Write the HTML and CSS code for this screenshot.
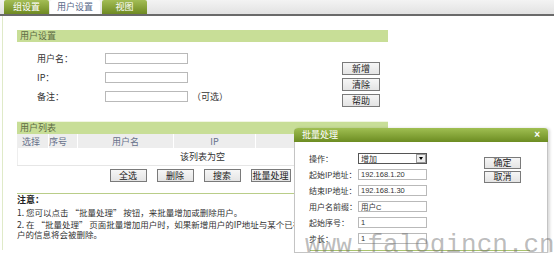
FILE: index.html
```html
<!DOCTYPE html>
<html lang="zh-CN">
<head>
    <meta charset="UTF-8">
    <title>用户设置</title>
    <link rel="stylesheet" href="styles.css">
</head>
<body>
    <div class="topbar">
        <div class="tab">组设置</div>
        <div class="tab active">用户设置</div>
        <div class="tab">视图</div>
    </div>

    <div class="main">
        <div class="content">
            <div class="section-head">用户设置</div>
            <div class="user-form">
                <div class="fields">
                    <div class="field-row">
                        <label>用户名：</label>
                        <input type="text" class="text-input">
                    </div>
                    <div class="field-row">
                        <label>IP：</label>
                        <input type="text" class="text-input">
                    </div>
                    <div class="field-row">
                        <label>备注：</label>
                        <input type="text" class="text-input">
                        <span class="hint">（可选）</span>
                    </div>
                </div>
                <div class="form-buttons">
                    <button class="btn">新增</button>
                    <button class="btn">清除</button>
                    <button class="btn">帮助</button>
                </div>
            </div>

            <div class="section-head">用户列表</div>
            <table class="user-table">
                <thead>
                    <tr>
                        <th class="col-check">选择</th>
                        <th class="col-no">序号</th>
                        <th class="col-name">用户名</th>
                        <th class="col-ip">IP</th>
                        <th>备注</th>
                    </tr>
                </thead>
                <tbody>
                    <tr>
                        <td colspan="5" class="empty">该列表为空</td>
                    </tr>
                </tbody>
            </table>

            <div class="list-buttons">
                <button class="btn">全选</button>
                <button class="btn">删除</button>
                <button class="btn">搜索</button>
                <button class="btn wide">批量处理</button>
            </div>

            <div class="notes">
                <p class="notes-title">注意：</p>
                <p>1. 您可以点击 “批量处理” 按钮，来批量增加或删除用户。</p>
                <p>2. 在 “批量处理” 页面批量增加用户时，如果新增用户的IP地址与某个已有用户的IP地址相同，则该已有用<br>户的信息将会被删除。</p>
            </div>
        </div>
    </div>

    <div class="dialog">
        <div class="dialog-title">
            <span>批量处理</span>
            <span class="close">×</span>
        </div>
        <div class="dialog-body">
            <div class="dialog-fields">
                <div class="field-row">
                    <label>操作：</label>
                    <div class="select-box">
                        <span>增加</span>
                        <span class="select-arrow"></span>
                    </div>
                </div>
                <div class="field-row">
                    <label>起始IP地址：</label>
                    <input type="text" class="text-input" value="192.168.1.20">
                </div>
                <div class="field-row">
                    <label>结束IP地址：</label>
                    <input type="text" class="text-input" value="192.168.1.30">
                </div>
                <div class="field-row">
                    <label>用户名前缀：</label>
                    <input type="text" class="text-input" value="用户C">
                </div>
                <div class="field-row">
                    <label>起始序号：</label>
                    <input type="text" class="text-input" value="1">
                </div>
                <div class="field-row">
                    <label>步长：</label>
                    <input type="text" class="text-input" value="1">
                </div>
            </div>
            <div class="dialog-buttons">
                <button class="btn">确定</button>
                <button class="btn">取消</button>
            </div>
        </div>
        <div class="dialog-foot"></div>
    </div>

    <div class="watermark">www.falogincn.cn</div>
</body>
</html>
```

FILE: styles.css
```css
html, body {
    overflow: hidden;
}
body {
    margin: 0;
    background: #fff;
    color: #333;
    font-family: "Noto Sans CJK SC", "Liberation Sans", sans-serif;
    font-size: 9px;
    width: 554px;
    height: 253px;
    position: relative;
}
.topbar {
    height: 14px;
    background: linear-gradient(#f3f3f3, #e2e2e2);
    border-bottom: 2px solid #6a6a6a;
    display: flex;
    align-items: flex-end;
    padding-left: 4px;
    gap: 1px;
}
.tab {
    width: 45px;
    height: 14px;
    line-height: 14px;
    text-align: center;
    color: #fff;
    background: linear-gradient(#a3bd55, #6f8a22);
    border-radius: 2px 2px 0 0;
}
.tab.active {
    width: 50px;
    background: #fff;
    color: #5a6a8a;
    margin-right: 1px;
}
.main {
    margin-left: 2px;
    border-left: 1px solid #dfeac8;
    padding: 14px 0 0 14px;
    min-height: 220px;
}
.content {
    width: 371px;
}
.section-head {
    height: 12px;
    line-height: 12px;
    padding-left: 3px;
    background: #c8de97;
    color: #5d6b45;
}
.user-form {
    height: 79px;
    border-bottom: 1px solid #f1f6e2;
    display: flex;
}
.fields {
    padding: 11px 0 0 20px;
    display: flex;
    flex-direction: column;
    gap: 8px;
}
.field-row {
    height: 11px;
    display: flex;
    align-items: center;
}
.fields label {
    width: 68px;
}
.text-input {
    box-sizing: border-box;
    width: 83px;
    height: 11px;
    margin: 0;
    padding: 0 2px;
    border: 1px solid #b9b9b9;
    font-family: "Liberation Sans", "Noto Sans CJK SC", sans-serif;
    font-size: 7.5px;
    color: #333;
}
.hint {
    margin-left: 4px;
}
.form-buttons {
    margin-left: auto;
    margin-right: 8px;
    padding-top: 20px;
    display: flex;
    flex-direction: column;
    gap: 3px;
}
.btn {
    box-sizing: border-box;
    width: 38px;
    height: 13px;
    padding: 0;
    margin: 0;
    border: 1px solid #7a7a7a;
    background: linear-gradient(#f6f6f6, #e4e4e4);
    font-family: "Noto Sans CJK SC", sans-serif;
    font-size: 9px;
    line-height: 11px;
    color: #222;
}
.btn.wide {
    width: 40px;
}
.user-table {
    width: 100%;
    border-collapse: collapse;
    border-left: 1px solid #eeeeee;
    border-right: 1px solid #eeeeee;
}
.user-table th {
    height: 14px;
    padding: 0;
    background: #ededed;
    border-right: 1px solid #fff;
    font-weight: normal;
    color: #66708a;
    text-align: center;
}
.user-table .col-check {
    width: 26px;
    text-align: left;
    padding-left: 4px;
}
.user-table .col-no {
    width: 28px;
    text-align: left;
}
.user-table .col-name {
    width: 95px;
}
.user-table .col-ip {
    width: 81px;
}
.user-table .empty {
    height: 17px;
    padding: 0;
    text-align: center;
    border-bottom: 1px solid #e6e6e6;
}
.list-buttons {
    margin-top: 3px;
    padding-right: 5px;
    display: flex;
    justify-content: center;
    gap: 10px;
}
.list-buttons .btn {
    width: 37px;
}
.list-buttons .btn.wide {
    width: 40px;
}
.notes {
    margin-top: 11px;
    border-top: 1px solid #b9cd88;
    padding-top: 1px;
    white-space: nowrap;
}
.notes p {
    margin: 2px 0 0;
    line-height: 10px;
    font-size: 8.5px;
}
.notes .notes-title {
    margin: 0 0 1px;
    font-weight: bold;
    font-size: 9px;
    color: #222;
}
.dialog {
    position: absolute;
    left: 294px;
    top: 128px;
    width: 254px;
    height: 125px;
    box-sizing: border-box;
    background: #fff;
    border: 1px solid #c4c4c4;
    border-top: none;
    box-shadow: 2px 0 3px rgba(0, 0, 0, 0.15);
    border-radius: 4px 4px 0 0;
}
.dialog-title {
    height: 14px;
    line-height: 14px;
    padding: 0 8px 0 8px;
    display: flex;
    justify-content: space-between;
    color: #fff;
    background: linear-gradient(#a0bf52, #6c8c22);
    border-radius: 4px 4px 0 0;
    margin: 0 -1px;
}
.close {
    font-weight: bold;
    font-family: "Liberation Sans", sans-serif;
    font-size: 10px;
}
.dialog-body {
    display: flex;
    padding: 11px 0 0 14px;
}
.dialog-fields {
    display: flex;
    flex-direction: column;
    gap: 5px;
}
.dialog-fields label {
    width: 49px;
    white-space: nowrap;
    font-size: 8px;
}
.dialog-fields .text-input {
    width: 69px;
}
.select-box {
    box-sizing: border-box;
    width: 69px;
    height: 11px;
    border: 1px solid #555;
    display: flex;
    align-items: center;
    justify-content: space-between;
    padding-left: 2px;
    font-size: 8px;
    line-height: 9px;
}
.select-arrow {
    width: 10px;
    height: 9px;
    box-sizing: border-box;
    border: 1px solid #999;
    background: #eee;
    position: relative;
}
.select-arrow::after {
    content: "";
    position: absolute;
    left: 2px;
    top: 2px;
    border-left: 2px solid transparent;
    border-right: 2px solid transparent;
    border-top: 3px solid #000;
}
.dialog-buttons {
    margin-left: auto;
    margin-right: 26px;
    padding-top: 4px;
    display: flex;
    flex-direction: column;
    gap: 2px;
}
.dialog-buttons .btn {
    width: 37px;
    height: 12px;
    line-height: 10px;
}
.dialog-foot {
    margin: 6px 17px 0 15px;
    border-top: 1px solid #a9c26e;
}
.watermark {
    position: absolute;
    left: 305px;
    top: 232px;
    font-family: "Liberation Mono", monospace;
    font-size: 26px;
    line-height: 26px;
    color: rgba(105, 105, 105, 0.45);
    white-space: nowrap;
}
```
